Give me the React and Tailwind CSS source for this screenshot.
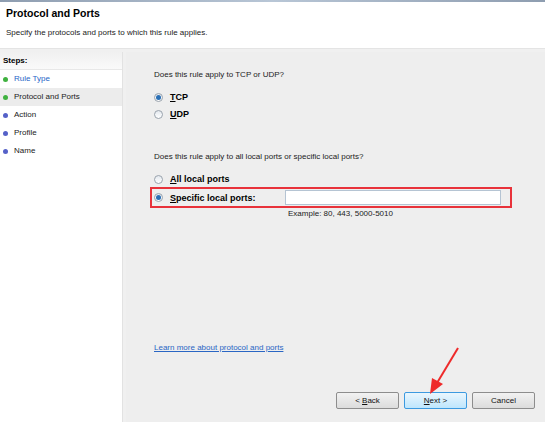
import React from "react";

const font = { fontFamily: '"Liberation Sans", Arial, sans-serif' };

const Radio = ({ checked }) => (
  <span className="w-[9px] h-[9px] rounded-full border border-[#9aa3ad] bg-gradient-to-b from-[#e3e8ee] to-white flex items-center justify-center shrink-0">
    {checked && <span className="w-[5px] h-[5px] rounded-full bg-[#2a6fb5]" />}
  </span>
);

const Step = ({ label, color, active, current }) => (
  <div className={`flex items-center h-[18px] pl-[3px] gap-[6px] ${current ? "bg-[#ececec]" : ""}`}>
    <span className={`w-[5px] h-[5px] rounded-full ${color}`} />
    <span className={active ? "text-[#1f66c7]" : "text-[#222]"}>{label}</span>
  </div>
);

const Button = ({ children, focus }) => (
  <div
    className={`h-[17px] w-[63px] flex items-center justify-center rounded-[2px] border bg-gradient-to-b ${
      focus
        ? "border-[#3c9ae0] from-[#eaf6fd] to-[#bee6fd]"
        : "border-[#8d8d8d] from-[#f2f2f2] to-[#dcdcdc]"
    } text-[#111]`}
  >
    <span>{children}</span>
  </div>
);

export default function App() {
  return (
    <div className="w-[545px] h-[422px] bg-[#f0f0f0] relative overflow-hidden text-[8px] leading-[10px]" style={font}>
      <div className="h-[2px] bg-gradient-to-r from-[#8e9db0] via-[#b8c6d6] to-[#8e9db0]" />
      <div className="bg-white h-[47px] pl-[6px] pt-[5px] border-b border-[#e4e4e4]">
        <div className="font-bold text-[10.5px] text-black leading-[12px]">Protocol and Ports</div>
        <div className="text-[#222] mt-[9px]">Specify the protocols and ports to which this rule applies.</div>
      </div>
      <div className="flex h-[373px] pt-[3px]">
        <div className="w-[123px] bg-white border-r border-[#e2e2e2]">
          <div className="h-[18px] pl-[3px] flex items-center font-bold text-black bg-gradient-to-b from-[#f0f0f0] to-[#fafafa] border-b border-[#e8e8e8]">
            Steps:
          </div>
          <Step label="Rule Type" color="bg-[#3fb13f]" active />
          <Step label="Protocol and Ports" color="bg-[#3fb13f]" current />
          <Step label="Action" color="bg-[#5561c8]" />
          <Step label="Profile" color="bg-[#5561c8]" />
          <Step label="Name" color="bg-[#5561c8]" />
        </div>
        <div className="flex-1 ml-[3px] bg-[#eeeeee] pl-[28px] pt-[18px] flex flex-col">
          <div className="text-[#222]">Does this rule apply to TCP or UDP?</div>
          <div className="flex flex-col gap-[7px] mt-[12px] font-bold text-black text-[9px]">
            <div className="flex items-center gap-[7px] h-[10px]">
              <Radio checked />
              <span><u>T</u>CP</span>
            </div>
            <div className="flex items-center gap-[7px] h-[10px]">
              <Radio />
              <span><u>U</u>DP</span>
            </div>
          </div>
          <div className="text-[#222] mt-[33px]">Does this rule apply to all local ports or specific local ports?</div>
          <div className="flex items-center gap-[7px] mt-[12px] h-[10px] font-bold text-black text-[9px]">
            <Radio />
            <span><u>A</u>ll local ports</span>
          </div>
          <div className="flex items-center mt-[3px] -ml-[4px] w-[362px] h-[21px] border-2 border-[#e8323a] pl-[2px] pr-[9px]">
            <div className="flex items-center gap-[7px] font-bold text-black text-[9px] w-[131px]">
              <Radio checked />
              <span><u>S</u>pecific local ports:</span>
            </div>
            <div className="flex-1 h-[15px] bg-white border border-[#b5c4d3]" />
          </div>
          <div className="text-[#222] pl-[134px] mt-[1px]">Example: 80, 443, 5000-5010</div>
          <div className="mt-auto mb-[69px] text-[#2a66c4] underline">Learn more about protocol and ports</div>
        </div>
      </div>
      <div className="absolute left-[336px] top-[392px] flex gap-[5px]">
        <Button>&lt; <u>B</u>ack</Button>
        <Button focus><u>N</u>ext &gt;</Button>
        <Button>Cancel</Button>
      </div>
      <svg className="absolute left-0 top-0" width="545" height="422">
        <line x1="458" y1="348" x2="437" y2="383" stroke="#ee2a2a" strokeWidth="2" />
        <polygon points="430,394 432,378 443,384" fill="#ee2a2a" />
      </svg>
    </div>
  );
}
